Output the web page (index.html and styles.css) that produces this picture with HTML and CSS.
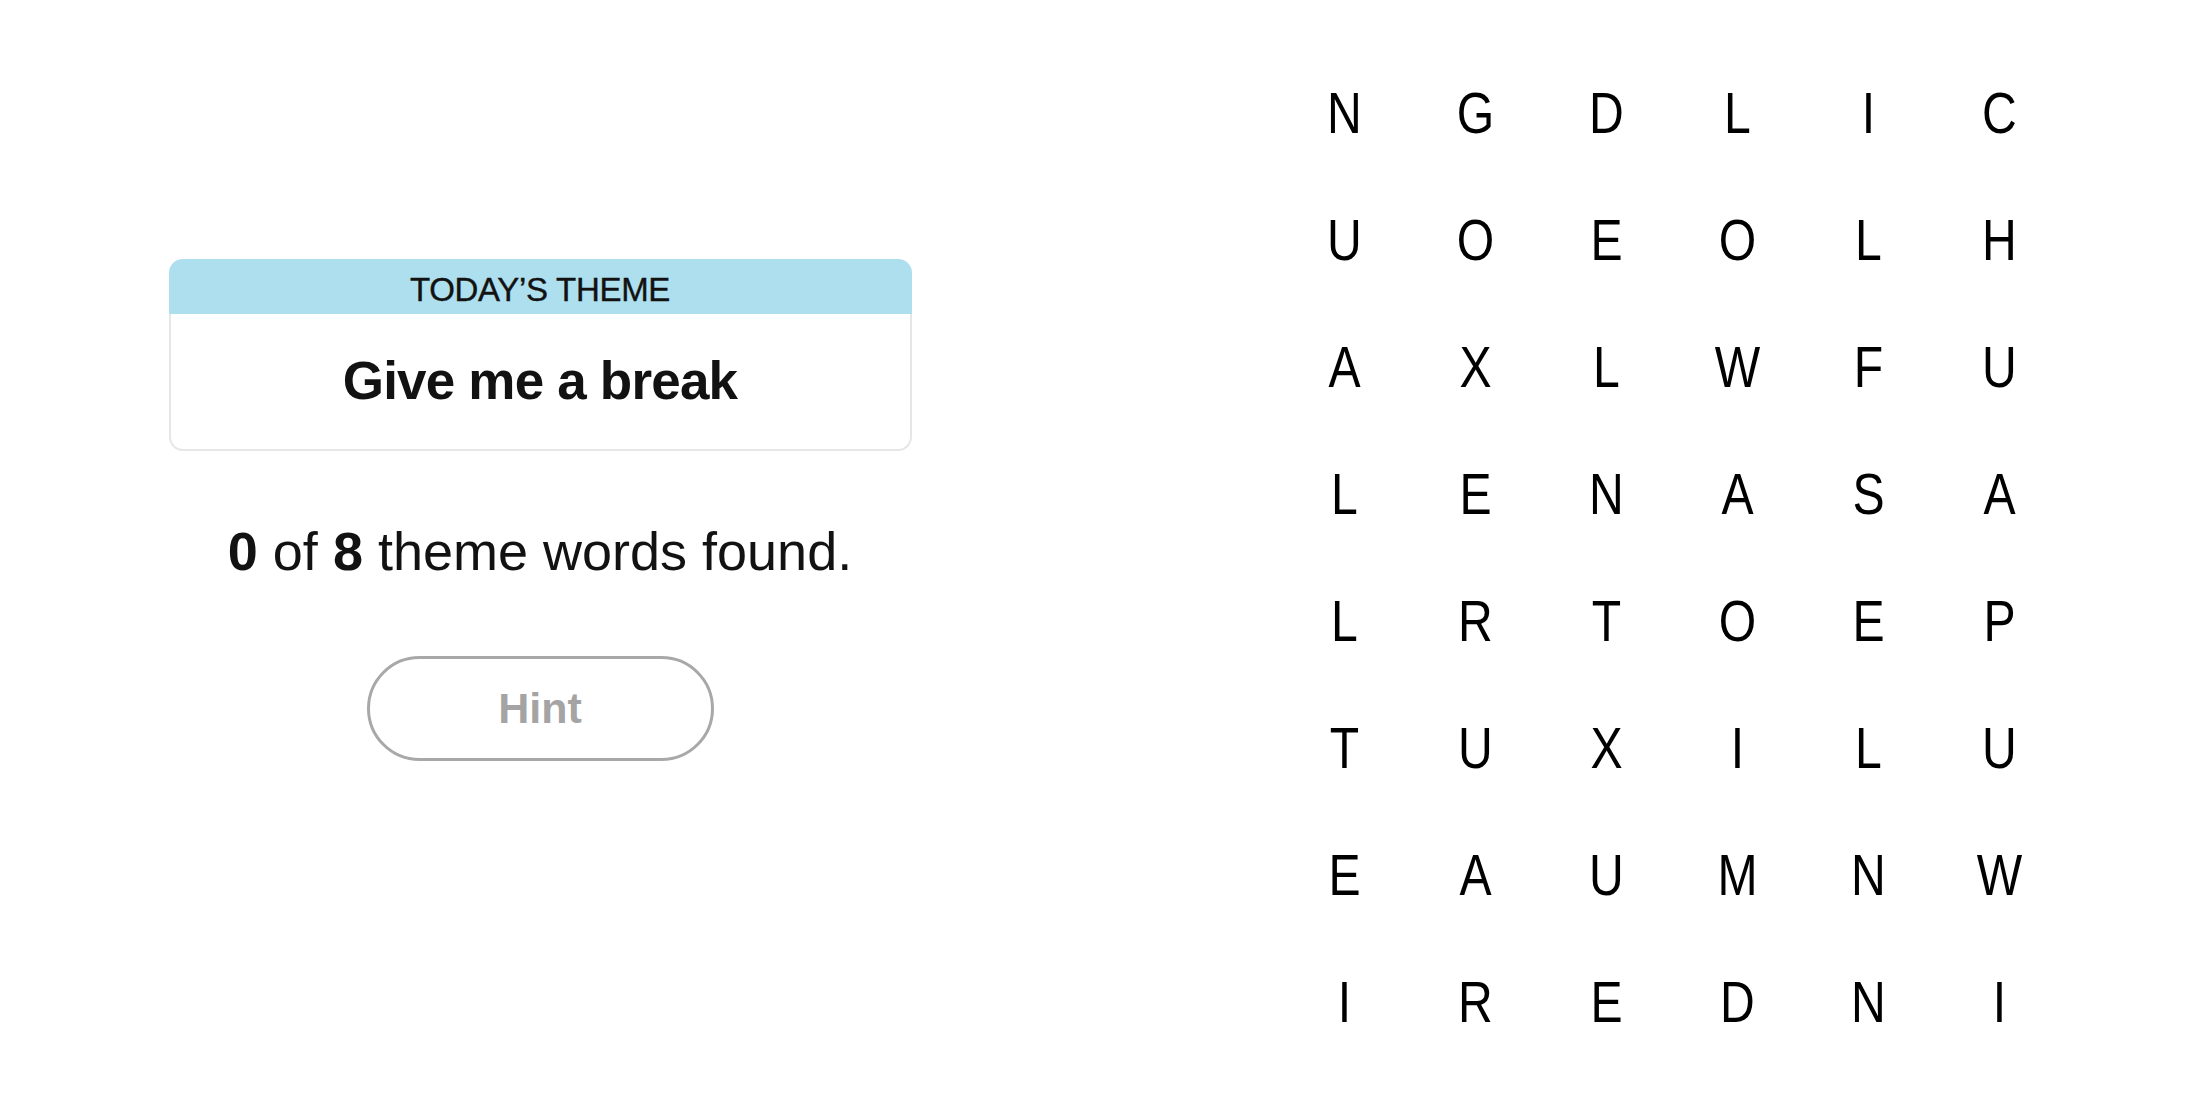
FILE: index.html
```html
<!DOCTYPE html>
<html lang="en">
<head>
<meta charset="utf-8">
<title>Strands</title>
<link rel="stylesheet" href="styles.css">
</head>
<body>
<main class="page">
  <section class="info">
    <div class="theme-card">
      <div class="theme-head">TODAY’S THEME</div>
      <div class="theme-body">Give me a break</div>
    </div>
    <p class="count"><b>0</b> of <b>8</b> theme words found.</p>
    <button class="hint" type="button">Hint</button>
  </section>
  <section class="board">
    <div class="grid">
      <span>N</span><span>G</span><span>D</span><span>L</span><span>I</span><span>C</span>
      <span>U</span><span>O</span><span>E</span><span>O</span><span>L</span><span>H</span>
      <span>A</span><span>X</span><span>L</span><span>W</span><span>F</span><span>U</span>
      <span>L</span><span>E</span><span>N</span><span>A</span><span>S</span><span>A</span>
      <span>L</span><span>R</span><span>T</span><span>O</span><span>E</span><span>P</span>
      <span>T</span><span>U</span><span>X</span><span>I</span><span>L</span><span>U</span>
      <span>E</span><span>A</span><span>U</span><span>M</span><span>N</span><span>W</span>
      <span>I</span><span>R</span><span>E</span><span>D</span><span>N</span><span>I</span>
    </div>
  </section>
</main>
</body>
</html>
```

FILE: styles.css
```css
html, body {
  margin: 0;
  padding: 0;
  background: #ffffff;
}

body {
  font-family: "Liberation Sans", Arial, sans-serif;
  color: #121212;
}

.page {
  display: flex;
  width: 2200px;
  height: 1100px;
}

.info {
  width: 1080px;
  display: flex;
  flex-direction: column;
  align-items: center;
  padding-top: 259px;
  box-sizing: border-box;
}

.theme-card {
  width: 743px;
}

.theme-head {
  background: #aedfee;
  border-radius: 14px 14px 0 0;
  height: 55px;
  line-height: 61px;
  text-align: center;
  font-size: 33px;
  letter-spacing: -0.3px;
  -webkit-text-stroke: 0.4px #121212;
  color: #121212;
}

.theme-body {
  border: 2px solid #e6e6e6;
  border-top: none;
  border-radius: 0 0 14px 14px;
  padding: 40px 0 42px;
  text-align: center;
  font-size: 53px;
  line-height: 1;
  letter-spacing: -0.8px;
  font-weight: 700;
  color: #121212;
}

.count {
  margin: 73px 0 0;
  font-size: 54px;
  line-height: 1;
  color: #121212;
}

.count b {
  font-weight: 700;
}

.hint {
  margin-top: 78px;
  width: 347px;
  height: 105px;
  border: 3px solid #a8a8a8;
  border-radius: 60px;
  background: #ffffff;
  font-family: "Liberation Sans", Arial, sans-serif;
  font-size: 43px;
  font-weight: 700;
  color: #a4a4a4;
  padding: 0;
}

.board {
  flex: 1;
  padding: 49px 0 0 199px;
}

.grid {
  display: grid;
  grid-template-columns: repeat(6, 131px);
  grid-auto-rows: 127px;
}

.grid span {
  display: flex;
  align-items: center;
  justify-content: center;
  font-family: "Liberation Sans", Arial, sans-serif;
  font-size: 58px;
  color: #000000;
  transform: scaleX(0.83);
}
```
